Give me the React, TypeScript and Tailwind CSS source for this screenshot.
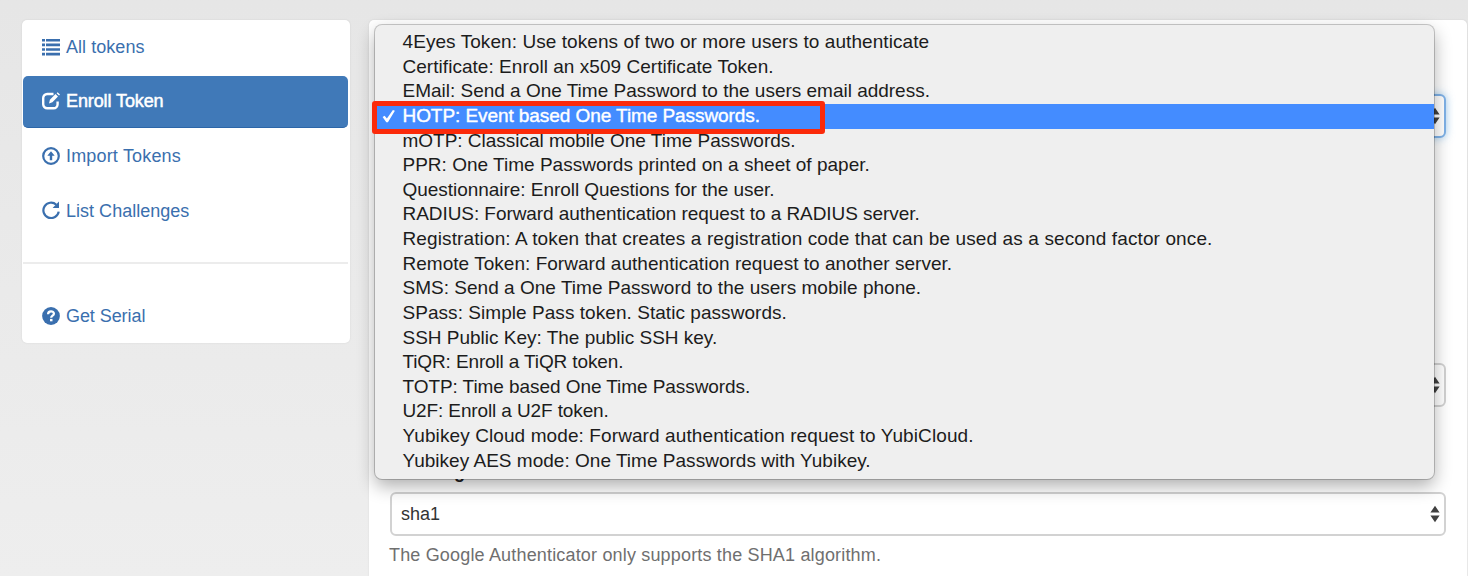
import type { ReactNode } from "react";

type Option = { label: string; tracking: string };

const options: Option[] = [
  { label: "4Eyes Token: Use tokens of two or more users to authenticate", tracking: "tracking-[0.07px]" },
  { label: "Certificate: Enroll an x509 Certificate Token.", tracking: "tracking-[0.04px]" },
  { label: "EMail: Send a One Time Password to the users email address.", tracking: "tracking-[-0.01px]" },
  { label: "HOTP: Event based One Time Passwords.", tracking: "tracking-[-0.07px]" },
  { label: "mOTP: Classical mobile One Time Passwords.", tracking: "tracking-[-0.02px]" },
  { label: "PPR: One Time Passwords printed on a sheet of paper.", tracking: "tracking-[0.01px]" },
  { label: "Questionnaire: Enroll Questions for the user.", tracking: "tracking-[-0.04px]" },
  { label: "RADIUS: Forward authentication request to a RADIUS server.", tracking: "tracking-[-0.06px]" },
  { label: "Registration: A token that creates a registration code that can be used as a second factor once.", tracking: "tracking-[0.12px]" },
  { label: "Remote Token: Forward authentication request to another server.", tracking: "tracking-[0.03px]" },
  { label: "SMS: Send a One Time Password to the users mobile phone.", tracking: "tracking-[0.02px]" },
  { label: "SPass: Simple Pass token. Static passwords.", tracking: "tracking-[0.05px]" },
  { label: "SSH Public Key: The public SSH key.", tracking: "tracking-[-0.01px]" },
  { label: "TiQR: Enroll a TiQR token.", tracking: "tracking-[-0.13px]" },
  { label: "TOTP: Time based One Time Passwords.", tracking: "tracking-[-0.07px]" },
  { label: "U2F: Enroll a U2F token.", tracking: "tracking-[-0.12px]" },
  { label: "Yubikey Cloud mode: Forward authentication request to YubiCloud.", tracking: "tracking-[0.1px]" },
  { label: "Yubikey AES mode: One Time Passwords with Yubikey.", tracking: "tracking-[0.02px]" },
];

const selected = 3;

function ListIcon() {
  return (
    <svg viewBox="0 0 18 18" className="h-[18px] w-[18px]" fill="currentColor">
      <path d="M0 1h3v2.6H0zM4 1h14v2.6H4zM0 5.6h3v2.6H0zM4 5.6h14v2.6H4zM0 10.2h3v2.6H0zM4 10.2h14v2.6H4zM0 14.8h3v2.6H0zM4 14.8h14v2.6H4z" />
    </svg>
  );
}

function EditIcon() {
  return (
    <svg viewBox="0 0 18 18" className="h-[18px] w-[18px]" fill="none" stroke="currentColor">
      <path d="M11.5 2H5.200a4 4 0 0 0-4 4v6.200a4 4 0 0 0 4 4h6.400a4 4 0 0 0 4-4V9.500" strokeWidth="2.4" />
      <path d="M7 11.400l.9-3.700 5.600-5.600 2.500 2.500-5.600 5.600zM14.600 1.200l1-1 2.400 2.400-1 1z" fill="currentColor" stroke="none" />
    </svg>
  );
}

function UploadIcon() {
  return (
    <svg viewBox="0 0 18 18" className="h-[18px] w-[18px]" fill="none" stroke="currentColor">
      <circle cx="9" cy="9" r="7.800" strokeWidth="2.200" />
      <path d="M9 4.300l3.700 4.500h-2.500v4.400H7.800V8.800H5.300z" fill="currentColor" stroke="none" />
    </svg>
  );
}

function RefreshIcon() {
  return (
    <svg viewBox="0 0 18 18" className="h-[18px] w-[18px]" fill="none" stroke="currentColor">
      <path d="M14.300 3.700A7.700 7.700 0 1 0 16.700 10.600" strokeWidth="2.200" />
      <path d="M17 .6v6.400h-6.400z" fill="currentColor" stroke="none" />
    </svg>
  );
}

function HelpIcon() {
  return (
    <svg viewBox="0 0 18 18" className="h-[18px] w-[18px]" fill="none">
      <circle cx="9" cy="9" r="8.900" fill="currentColor" />
      <path d="M6.100 7.300C6.100 3.400 11.900 3.600 11.900 6.700c0 2-2.700 2-2.700 4" stroke="#fff" strokeWidth="2.300" />
      <path d="M8 11.900h2.500v2.400H8z" fill="#fff" />
    </svg>
  );
}

function NavItem({ icon, label, text, active = false }: { icon: ReactNode; label: string; text: string; active?: boolean }) {
  return (
    <a
      className={
        active
          ? "flex h-[52px] items-center gap-[6px] rounded-[5px] border-b border-[#2c66a8] bg-[#4079b8] pl-[19px] text-white [-webkit-text-stroke:0.5px_white]"
          : "flex h-[52px] items-center gap-[6px] pl-[19px] text-[#3a6fae]"
      }
    >
      <span className="-mt-[2px]">{icon}</span>
      <span className={text}>{label}</span>
    </a>
  );
}

function Arrows() {
  return (
    <svg viewBox="0 0 10 18" className="h-[18px] w-[10px] shrink-0" fill="#404040">
      <path d="M5 .8l4.600 6.700H.4zM5 17.200L.4 10.500h9.200z" />
    </svg>
  );
}

function SelectBox({ value = "", focused = false }: { value?: string; focused?: boolean }) {
  return (
    <div
      className={
        focused
          ? "flex h-[44px] items-center justify-between rounded-[6px] border-2 border-[#7fb2e8] bg-white pr-[4px] pl-[9px] shadow-[0_0_8px_rgba(102,175,233,0.6)]"
          : "flex h-[44px] items-center justify-between rounded-[6px] border-2 border-[#d2d2d2] bg-white pr-[4px] pl-[9px]"
      }
    >
      <span className="text-[18px] text-[#333]">{value}</span>
      <Arrows />
    </div>
  );
}

export default function App() {
  return (
    <div className="relative flex h-[576px] w-[1468px] items-start gap-[19px] overflow-hidden bg-linear-to-b from-[#e6e6e6] to-[#eeeeee] pt-[20px] pl-[22px] font-['Liberation_Sans',Arial,sans-serif]">
      <nav className="flex h-[323px] w-[328px] shrink-0 flex-col rounded-[5px] bg-white pt-[1.500px] pr-[2px] pl-[1px] text-[18px] shadow-[0_0_2px_rgba(0,0,0,0.1)]">
        <div className="flex flex-col gap-[2.500px]">
          <NavItem icon={<ListIcon />} label="All tokens" text="tracking-[0.05px]" />
          <NavItem icon={<EditIcon />} label="Enroll Token" text="tracking-[-0.1px]" active />
          <NavItem icon={<UploadIcon />} label="Import Tokens" text="tracking-[0.17px]" />
          <NavItem icon={<RefreshIcon />} label="List Challenges" text="tracking-[0.02px]" />
        </div>
        <div className="mt-[25px] mb-[27px] h-[1.500px] bg-[#ececec]" />
        <NavItem icon={<HelpIcon />} label="Get Serial" text="tracking-[-0.07px]" />
      </nav>

      <main className="flex h-[556px] w-[1098px] shrink-0 flex-col rounded-t-[5px] bg-white pt-[74px] pr-[21px] pl-[21px] shadow-[0_0_2px_rgba(0,0,0,0.1)]">
        <SelectBox focused />
        <div className="mt-[225px]">
          <SelectBox />
        </div>
        <div className="mt-[54px] h-[31px] text-[18px] leading-[22px] font-bold text-[#222]">Hash algorithm</div>
        <SelectBox value="sha1" />
        <p className="mt-[8px] -ml-px text-[18px] leading-[22px] text-[#6f6f6f]">
          <span className="tracking-[0.17px]">The Google Authenticator only supports the SHA1 algorithm.</span>
        </p>
      </main>

      <ul className="absolute top-[25px] left-[375px] h-[454px] w-[1059px] rounded-[7px] bg-[#efefef] pt-[5px] text-[19px] text-[#1c1c1c] shadow-[0_0_0_1px_rgba(0,0,0,0.2),0_7px_18px_rgba(0,0,0,0.32)]">
        {options.map((option, index) => (
          <li
            key={option.label}
            className={
              index === selected
                ? "flex h-[24.640px] items-center bg-[#448cff] text-white [-webkit-text-stroke:0.4px_white]"
                : "flex h-[24.640px] items-center"
            }
          >
            <span className="flex w-[27.500px] shrink-0 pl-[7px]">
              {index === selected && (
                <svg viewBox="0 0 14 14" className="h-[14px] w-[14px]" fill="white">
                  <path d="M.6 8.100L2.600 6.700 4.900 9.500 10.900.9 12.900 1.800 5.900 13.200H4.300z" />
                </svg>
              )}
            </span>
            <span className={`whitespace-nowrap ${option.tracking}`}>{option.label}</span>
          </li>
        ))}
      </ul>

      <div className="absolute top-[101px] left-[372px] h-[33px] w-[453px] rounded-[3px] border-[5px] border-[#fb2a0a]" />
    </div>
  );
}
